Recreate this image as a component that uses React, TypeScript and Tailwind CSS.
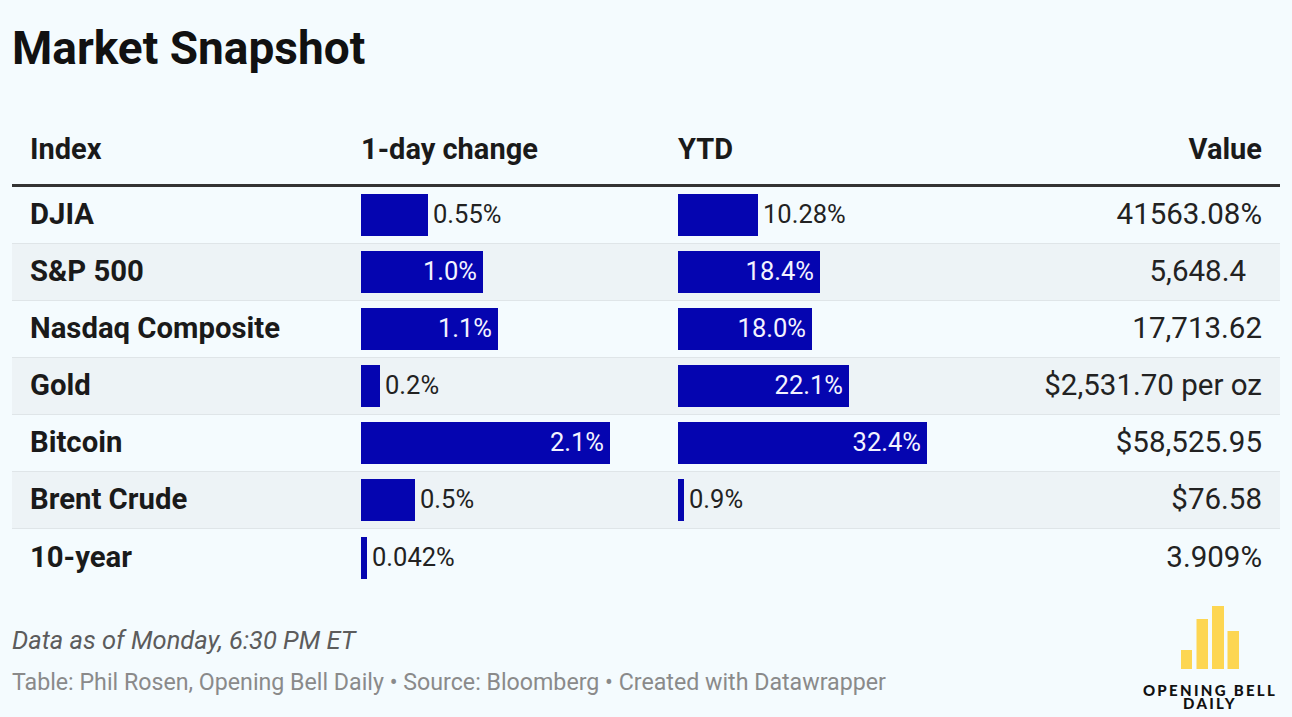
import React from 'react';

type Bar = { text: string; width: number };
type Row = { name: string; day: Bar; ytd?: Bar; value: string; valuePad?: boolean };

const rows: Row[] = [
  { name: 'DJIA', day: { text: '0.55%', width: 67 }, ytd: { text: '10.28%', width: 80 }, value: '41563.08%' },
  { name: 'S&P 500', day: { text: '1.0%', width: 122 }, ytd: { text: '18.4%', width: 142 }, value: '5,648.4', valuePad: true },
  { name: 'Nasdaq Composite', day: { text: '1.1%', width: 137 }, ytd: { text: '18.0%', width: 134 }, value: '17,713.62' },
  { name: 'Gold', day: { text: '0.2%', width: 19 }, ytd: { text: '22.1%', width: 171 }, value: '$2,531.70 per oz' },
  { name: 'Bitcoin', day: { text: '2.1%', width: 249 }, ytd: { text: '32.4%', width: 249 }, value: '$58,525.95' },
  { name: 'Brent Crude', day: { text: '0.5%', width: 54 }, ytd: { text: '0.9%', width: 6 }, value: '$76.58' },
  { name: '10-year', day: { text: '0.042%', width: 4 }, value: '3.909%' },
];

function BarCell({ bar }: { bar?: Bar }) {
  if (!bar) return null;
  const inside = bar.width > 100;
  return (
    <div className="flex items-center h-[42px]">
      <div
        className="h-full bg-[#0505b0] flex items-center justify-end pr-[6px]"
        style={{ width: bar.width }}
      >
        {inside && <span className="text-[#f3f3ff] text-[25.5px] leading-none">{bar.text}</span>}
      </div>
      {!inside && <span className="ml-[5px] text-[#222] text-[25.5px] leading-none">{bar.text}</span>}
    </div>
  );
}

function Logo() {
  return (
    <div className="flex flex-col items-center w-[140px]">
      <svg width="59" height="63" viewBox="0 0 59 63">
        <rect x="0" y="44" width="11" height="19" fill="#fdd652" />
        <rect x="15.5" y="13" width="11.5" height="50" fill="#fdd652" />
        <rect x="31" y="0" width="12" height="63" fill="#fdd652" />
        <rect x="46.5" y="25" width="11.5" height="38" fill="#fdd652" />
      </svg>
      <div
        className="mt-[15px] text-[15px] leading-[13px] font-black tracking-[2.3px] text-[#111] text-center"
        style={{ fontFamily: 'Lato, "DejaVu Sans", sans-serif' }}
      >
        OPENING BELL
        <br />
        DAILY
      </div>
    </div>
  );
}

export default function App() {
  return (
    <div
      className="w-[1292px] h-[717px] bg-[#f4fbfe] px-[12px] overflow-hidden"
      style={{ fontFamily: 'Roboto, "Liberation Sans", sans-serif' }}
    >
      {/* Title */}
      <h1 className="pt-[25px] text-[46px] leading-none font-bold text-[#111]">Market Snapshot</h1>

      {/* Table header */}
      <div className="mt-[64px] pb-[20px] border-b-[3px] border-[#333] flex text-[29px] leading-none font-bold text-[#1a1a1a]">
        <div className="w-[349px] pl-[18px]">Index</div>
        <div className="w-[317px]">1-day change</div>
        <div className="flex-1">YTD</div>
        <div className="pr-[18px]">Value</div>
      </div>

      {/* Rows */}
      {rows.map((row, i) => (
        <div
          key={row.name}
          className={`flex items-center h-[57px] border-b border-[#dfe5e8] ${i % 2 === 1 ? 'bg-[#edf3f6]' : ''} ${i === rows.length - 1 ? 'border-b-0' : ''}`}
        >
          <div className="w-[349px] pl-[18px] text-[29.3px] leading-none font-bold text-[#1a1a1a]">{row.name}</div>
          <div className="w-[317px]">
            <BarCell bar={row.day} />
          </div>
          <div className="flex-1">
            <BarCell bar={row.ytd} />
          </div>
          <div className={`text-[29.5px] leading-none text-[#222] text-right ${row.valuePad ? 'pr-[34px]' : 'pr-[18px]'}`}>
            {row.value}
          </div>
        </div>
      ))}

      {/* Footer */}
      <div className="flex justify-between items-start pt-[20px]">
        <div>
          <p className="mt-[22px] text-[25.5px] leading-none italic text-[#5c5c5c]">Data as of Monday, 6:30 PM ET</p>
          <p className="mt-[17px] text-[23.2px] leading-none text-[#8a8a8a]">
            Table: Phil Rosen, Opening Bell Daily • Source: Bloomberg • Created with Datawrapper
          </p>
        </div>
        <Logo />
      </div>
    </div>
  );
}
